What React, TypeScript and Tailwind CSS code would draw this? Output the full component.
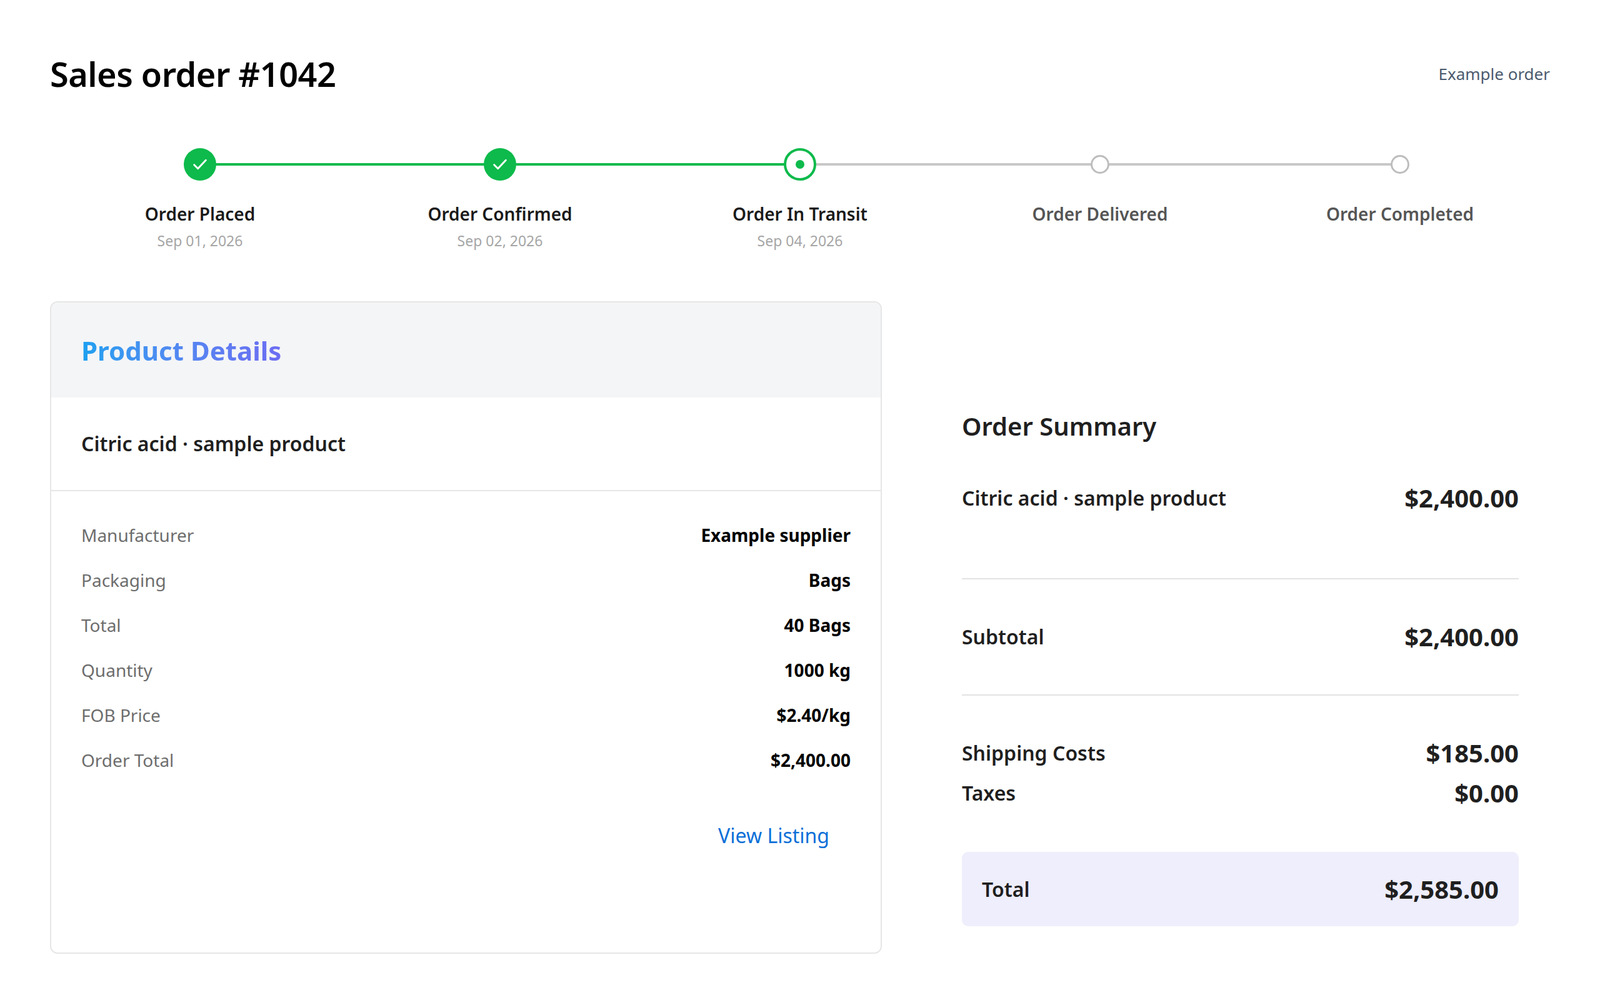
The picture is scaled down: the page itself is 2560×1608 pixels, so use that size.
import React from 'react';

const steps = [
  { label: 'Order Placed', date: 'Sep 01, 2026', state: 'done' },
  { label: 'Order Confirmed', date: 'Sep 02, 2026', state: 'done' },
  { label: 'Order In Transit', date: 'Sep 04, 2026', state: 'current' },
  { label: 'Order Delivered', date: '', state: 'todo' },
  { label: 'Order Completed', date: '', state: 'todo' },
];

const details = [
  ['Manufacturer', 'Example supplier'],
  ['Packaging', 'Bags'],
  ['Total', '40 Bags'],
  ['Quantity', '1000 kg'],
  ['FOB Price', '$2.40/kg'],
  ['Order Total', '$2,400.00'],
];

const StepDot: React.FC<{ state: string }> = ({ state }) => {
  if (state === 'done') {
    return (
      <div className="w-[52px] h-[52px] rounded-full bg-[#0dba4b] flex items-center justify-center">
        <svg width="32" height="32" viewBox="0 0 24 24" fill="none" stroke="white" strokeWidth="2.2" strokeLinecap="round" strokeLinejoin="round">
          <path d="M5 12.5l4.5 4.5L19 7" />
        </svg>
      </div>
    );
  }
  if (state === 'current') {
    return (
      <div className="w-[52px] h-[52px] rounded-full bg-white border-[4px] border-[#0dba4b] flex items-center justify-center">
        <div className="w-[14px] h-[14px] rounded-full bg-[#0dba4b]" />
      </div>
    );
  }
  return <div className="w-[30px] h-[30px] rounded-full bg-white border-[3px] border-[#bdbdbd]" />;
};

const App: React.FC = () => {
  return (
    <div className="min-h-screen bg-white text-[#1f1f1f] font-['Open_Sans',sans-serif] px-[80px] pt-[88px] pb-[80px]">
      <div className="flex items-center justify-between">
        <h1 className="text-[54px] leading-[60px] font-semibold text-black tracking-[-0.5px]">Sales order #1042</h1>
        <span className="text-[26px] text-[#4b5a6e]">Example order</span>
      </div>

      <div className="grid grid-cols-5 mt-[89px]">
        {steps.map((s, i) => (
          <div key={s.label} className="flex flex-col items-center">
            <div className="relative w-full h-[52px] flex items-center justify-center">
              {i > 0 && (
                <div className={`absolute left-0 right-1/2 top-[24px] h-[4px] ${s.state === 'todo' ? 'bg-[#c8c8c8]' : 'bg-[#0dba4b]'}`} />
              )}
              {i < steps.length - 1 && (
                <div className={`absolute left-1/2 right-0 top-[24px] h-[4px] ${steps[i + 1].state === 'todo' ? 'bg-[#c8c8c8]' : 'bg-[#0dba4b]'}`} />
              )}
              <div className="relative">
                <StepDot state={s.state} />
              </div>
            </div>
            <div className={`mt-[35px] text-[28px] leading-[36px] font-semibold ${s.state === 'todo' ? 'text-[#555]' : 'text-[#1a1a1a]'}`}>{s.label}</div>
            <div className="mt-[10px] text-[23px] leading-[30px] text-[#a6a6a6] h-[30px]">{s.date}</div>
          </div>
        ))}
      </div>

      <div className="flex mt-[82px] gap-[128px]">
        <div className="w-[1331px] h-[1044px] border-2 border-[#e6e6e6] rounded-[12px] overflow-hidden flex flex-col">
          <div className="bg-[#f4f5f7] h-[152px] px-[48px] flex items-center">
            <h2 className="text-[42px] font-bold bg-gradient-to-r from-[#1aa0f0] to-[#6b6cf2] bg-clip-text text-transparent">Product Details</h2>
          </div>
          <div className="h-[150px] px-[48px] flex items-center border-b-2 border-[#e6e6e6]">
            <span className="text-[32px] font-semibold">Citric acid · sample product</span>
          </div>
          <div className="px-[48px] pt-[52px] flex flex-col gap-[36px]">
            {details.map(([k, v]) => (
              <div key={k} className="flex justify-between items-center h-[36px]">
                <span className="text-[28px] text-[#6d6d6d]">{k}</span>
                <span className="text-[28px] font-bold text-black">{v}</span>
              </div>
            ))}
          </div>
          <div className="flex justify-end pr-[82px] mt-[79px]">
            <span className="text-[32px] text-[#0b6fd8]">View Listing</span>
          </div>
        </div>

        <div className="w-[891px] pt-[170px] flex flex-col">
          <h3 className="text-[40px] font-semibold">Order Summary</h3>
          <div className="flex justify-between items-center mt-[55px]">
            <span className="text-[32px] font-semibold">Citric acid · sample product</span>
            <span className="text-[40px] font-bold">$2,400.00</span>
          </div>
          <div className="h-[2px] bg-[#e3e3e3] mt-[98px]" />
          <div className="flex justify-between items-center h-[184px]">
            <span className="text-[32px] font-semibold">Subtotal</span>
            <span className="text-[40px] font-bold">$2,400.00</span>
          </div>
          <div className="h-[2px] bg-[#e3e3e3] mb-[62px]" />
          <div className="flex justify-between items-center">
            <span className="text-[32px] font-semibold">Shipping Costs</span>
            <span className="text-[40px] font-bold">$185.00</span>
          </div>
          <div className="flex justify-between items-center mt-[4px]">
            <span className="text-[32px] font-semibold">Taxes</span>
            <span className="text-[40px] font-bold">$0.00</span>
          </div>
          <div className="mt-[64px] h-[119px] bg-[#eeeefc] rounded-[10px] px-[32px] flex justify-between items-center">
            <span className="text-[32px] font-semibold">Total</span>
            <span className="text-[40px] font-bold">$2,585.00</span>
          </div>
        </div>
      </div>
    </div>
  );
};

export default App;
